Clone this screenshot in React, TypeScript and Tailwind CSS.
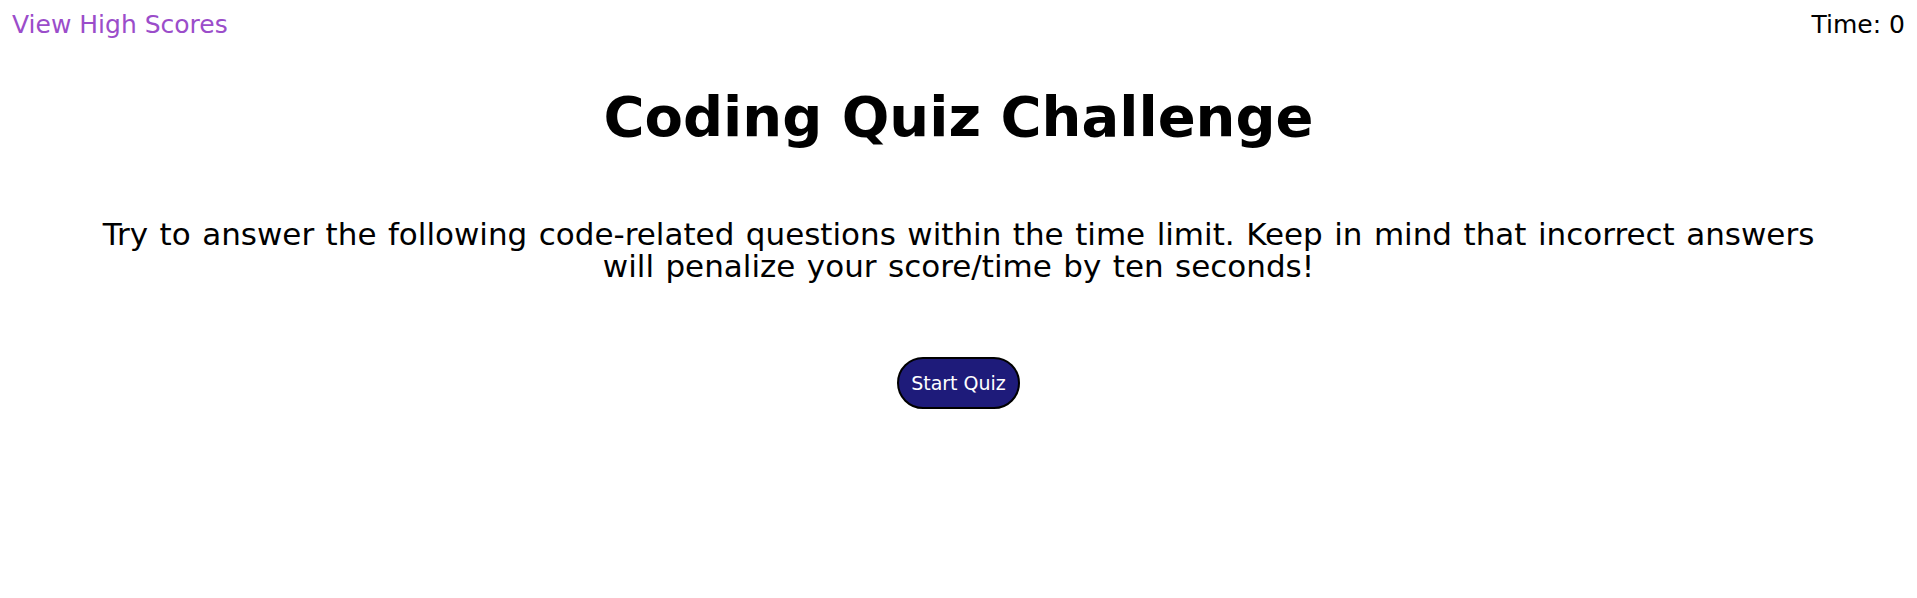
export default function App() {
  return (
    <div className="min-h-screen bg-white text-black font-['DejaVu_Sans',Verdana,sans-serif]">
      <header className="flex items-start justify-between px-3 pt-[10px] text-[25px] leading-[29px]">
        <a href="#" className="text-[#9b4dca]">View High Scores</a>
        <span>Time: 0</span>
      </header>

      <main className="flex flex-col items-center text-center">
        <h1 className="mt-[45px] text-[56px] font-bold leading-[65px]">Coding Quiz Challenge</h1>
        <p className="mt-[69px] w-[1750px] text-[31px] leading-[32px] [word-spacing:1.6px]">
          Try to answer the following code-related questions within the time limit. Keep in mind that incorrect answers will penalize your score/time by ten seconds!
        </p>
        <button className="mt-[75px] rounded-full border-2 border-black bg-[#1e1b7a] px-[12px] py-[13px] text-[19px] leading-[22px] text-white">
          Start Quiz
        </button>
      </main>
    </div>
  )
}
